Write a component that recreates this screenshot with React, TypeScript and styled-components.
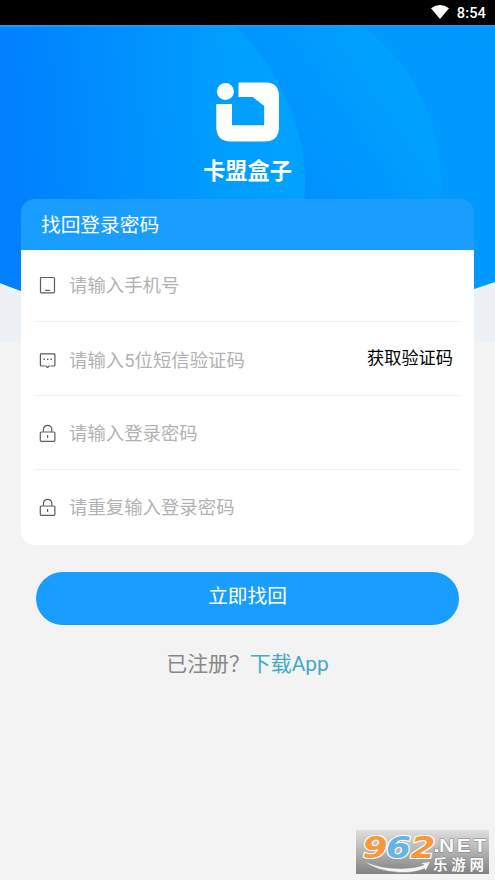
import React from "react";
import styled, { createGlobalStyle } from "styled-components";

const GlobalStyle = createGlobalStyle`
  * { box-sizing: border-box; }
  body { margin: 0; background: #f3f3f3; }
  body, input, button { font-family: Roboto, "Noto Sans CJK SC", sans-serif; }
`;

const Screen = styled.div`
  position: relative;
  width: 495px;
  height: 880px;
  overflow: hidden;
  background: #f3f3f3;
`;

const StatusBar = styled.header`
  display: flex;
  justify-content: flex-end;
  align-items: center;
  gap: 8px;
  height: 25px;
  padding: 1px 9px 0 0;
  background: #000;
  color: #fff;
  font-size: 14.6px;
  font-weight: 500;
  letter-spacing: 0.1px;
  svg { margin-top: -3px; }
`;

const Backdrop = styled.svg`
  position: absolute;
  top: 25px;
  left: 0;
`;

const Main = styled.main`
  position: relative;
  display: flex;
  flex-direction: column;
  align-items: center;
`;

const Brand = styled.div`
  display: flex;
  flex-direction: column;
  align-items: center;
  height: 174px;
  padding-top: 57px;
`;

const BrandName = styled.h1`
  margin: 12px 0 0;
  color: #fff;
  font-size: 22.2px;
  line-height: 33px;
  font-weight: 700;
`;

const Card = styled.section`
  width: 453px;
  height: 346px;
  border-radius: 14px;
  background: linear-gradient(#199eff 51px, #fff 51px);
`;

const CardTitle = styled.h2`
  height: 51px;
  margin: 0;
  padding-left: 20px;
  color: #fff;
  font-size: 19.7px;
  line-height: 54px;
  font-weight: 400;
`;

const Field = styled.label<{ $height: number; $shift?: number; $last?: boolean }>`
  display: flex;
  align-items: center;
  height: ${(p) => p.$height}px;
  margin: 0 14px 0 13px;
  padding: ${(p) => p.$shift ?? 0}px 7px 0 5px;
  border-bottom: ${(p) => (p.$last ? "0" : "1px solid #f2f2f2")};
  svg { flex: none; }
`;

const Input = styled.input`
  flex: 1;
  min-width: 0;
  height: 34px;
  margin-left: 13px;
  padding: 0;
  border: 0;
  outline: 0;
  background: transparent;
  color: #333;
  font-size: 18.4px;
  &::placeholder { color: #b2b2b2; opacity: 1; }
`;

const CodeButton = styled.button`
  padding: 0;
  margin-top: -8px;
  border: 0;
  background: none;
  color: #000;
  font-size: 17.2px;
`;

const Submit = styled.button`
  width: 423px;
  height: 53px;
  margin-top: 26.5px;
  padding: 0 0 8px;
  border: 0;
  border-radius: 27px;
  background: #199eff;
  color: #fff;
  font-size: 19.7px;
`;

const Footer = styled.p`
  margin: 23px 0 0;
  color: #888;
  font-size: 20.9px;
  line-height: 32px;
`;

const DownloadLink = styled.a`
  color: #42abc9;
`;

const Watermark = styled.div`
  position: absolute;
  left: 356px;
  top: 830px;
  width: 133px;
  height: 44px;
  svg { display: block; overflow: visible; }
`;

function Background() {
  return (
    <Backdrop width="495" height="317" viewBox="0 25 495 317">
      <defs>
        <linearGradient id="near" gradientUnits="userSpaceOnUse" x1="0" y1="130" x2="300" y2="110">
          <stop offset="0" stopColor="#007fff" />
          <stop offset="0.75" stopColor="#009eff" />
          <stop offset="1" stopColor="#00a2ff" />
        </linearGradient>
        <linearGradient id="middle" gradientUnits="userSpaceOnUse" x1="280" y1="160" x2="390" y2="85">
          <stop offset="0" stopColor="#0091ff" />
          <stop offset="1" stopColor="#00a0ff" />
        </linearGradient>
        <clipPath id="dome">
          <path d="M0 25H495V282Q474 289 460 294Q248 365 35 296Q21 291 0 283Z" />
        </clipPath>
      </defs>
      <rect y="25" width="495" height="317" fill="#edf1f6" />
      <g clipPath="url(#dome)">
        <rect y="25" width="495" height="317" fill="#009aff" />
        <ellipse cx="242" cy="184" rx="199" ry="199" fill="url(#middle)" />
        <path d="M0 25H235C282 72 305 130 305 182C305 240 280 300 230 342H0Z" fill="url(#near)" />
      </g>
      <rect y="25" width="495" height="2" fill="#159bfa" />
    </Backdrop>
  );
}

function Logo() {
  return (
    <svg width="64" height="61" viewBox="0 0 64 61" fill="#fff">
      <circle cx="9.4" cy="9.5" r="8.5" />
      <path d="M22.5 .5H50Q63 .5 63 14.5V45Q63 59.5 48.5 59.5H15Q.3 59.5 .3 45V22H16V43.2H48.2V24L36.7 15H22.5Z" />
    </svg>
  );
}

const iconProps = { width: 17, height: 20, viewBox: "0 0 17 20", fill: "none", stroke: "#5c5c5c", strokeWidth: 1.2 };

function PhoneIcon() {
  return (
    <svg {...iconProps}>
      <rect x="1.5" y="1.5" width="14" height="15.4" rx="1" />
      <path d="M6.3 14.4h4.6" />
    </svg>
  );
}

function MessageIcon() {
  return (
    <svg {...iconProps}>
      <path d="M5.8 15H2.2q-.8 0-.8-.8V3.7q0-.8.8-.8h12.9q.8 0 .8.8v10.5q0 .8-.8.8h-3.6" />
      <path d="M6.4 14.6l2.2 1.9 2.2-1.9" />
      <path d="M4.5 8.3h1.4M8 8.3h1.4M11.4 8.3h1.4" strokeWidth="1.5" />
    </svg>
  );
}

function LockIcon() {
  return (
    <svg {...iconProps}>
      <rect x="1.3" y="8" width="14.6" height="9.3" rx="1" />
      <path d="M4.4 7.8V5.5a4.2 4.2 0 0 1 8.4 0v2.3M8.6 11.1v2.8" />
    </svg>
  );
}

function SiteMark() {
  return (
    <Watermark>
      <svg width="133" height="44" viewBox="0 0 133 44">
        <defs>
          <linearGradient id="plate" x1="0" y1="0" x2="0" y2="1">
            <stop offset="0" stopColor="#dedede" />
            <stop offset=".5" stopColor="#b2b2b2" />
            <stop offset="1" stopColor="#828282" />
          </linearGradient>
        </defs>
        <rect width="133" height="44" fill="url(#plate)" />
        <g fontFamily="DejaVu Sans, sans-serif" fontWeight="700" fontStyle="italic" fontSize="31" stroke="#fff" strokeWidth="2.2" paintOrder="stroke" strokeLinejoin="round">
          <text x="6.5" y="27.5" textLength="25" lengthAdjust="spacingAndGlyphs" fill="#f8983a">9</text>
          <text x="30" y="27.5" textLength="25" lengthAdjust="spacingAndGlyphs" fill="#64b5e4">6</text>
          <text x="54.5" y="27.5" textLength="25" lengthAdjust="spacingAndGlyphs" fill="#f8983a">2</text>
        </g>
        <path d="M7.5 31Q25 39 46 38.5Q60 38 68 35L64.5 33L74.5 31.5L69.5 41L68.5 38.5Q59 43 44 42.5Q20 41 7.5 31Z" fill="#f4f4f4" stroke="#8a8a8a" strokeWidth=".5" />
        <g fill="#fafafa" stroke="#818181" strokeWidth="1" paintOrder="stroke">
          <text x="77" y="22" fontFamily="Liberation Sans, sans-serif" fontWeight="700" fontSize="19" textLength="7" lengthAdjust="spacingAndGlyphs">.</text>
          <text x="83" y="22" fontFamily="Liberation Sans, sans-serif" fontWeight="700" fontSize="19" textLength="50" letterSpacing="2.4" lengthAdjust="spacingAndGlyphs">NET</text>
          <text x="77" y="39.5" fontFamily="Noto Sans CJK SC, sans-serif" fontWeight="700" fontSize="14.5" textLength="51">乐游网</text>
        </g>
      </svg>
    </Watermark>
  );
}

export default function App() {
  return (
    <>
      <GlobalStyle />
      <Screen>
        <StatusBar>
          <svg width="18" height="14" viewBox="0 0 18 14" fill="#fff">
            <path d="M0 3.2Q9-3 18 3.2L9 14Z" />
          </svg>
          <span>8:54</span>
        </StatusBar>
        <Background />
        <Main>
          <Brand>
            <Logo />
            <BrandName>卡盟盒子</BrandName>
          </Brand>
          <Card>
            <CardTitle>找回登录密码</CardTitle>
            <Field $height={72}>
              <PhoneIcon />
              <Input placeholder="请输入手机号" />
            </Field>
            <Field $height={74} $shift={4}>
              <MessageIcon />
              <Input placeholder="请输入5位短信验证码" />
              <CodeButton>获取验证码</CodeButton>
            </Field>
            <Field $height={74} $shift={2}>
              <LockIcon />
              <Input type="password" placeholder="请输入登录密码" />
            </Field>
            <Field $height={75} $last>
              <LockIcon />
              <Input type="password" placeholder="请重复输入登录密码" />
            </Field>
          </Card>
          <Submit>立即找回</Submit>
          <Footer>
            已注册？<DownloadLink>下载App</DownloadLink>
          </Footer>
        </Main>
        <SiteMark />
      </Screen>
    </>
  );
}
